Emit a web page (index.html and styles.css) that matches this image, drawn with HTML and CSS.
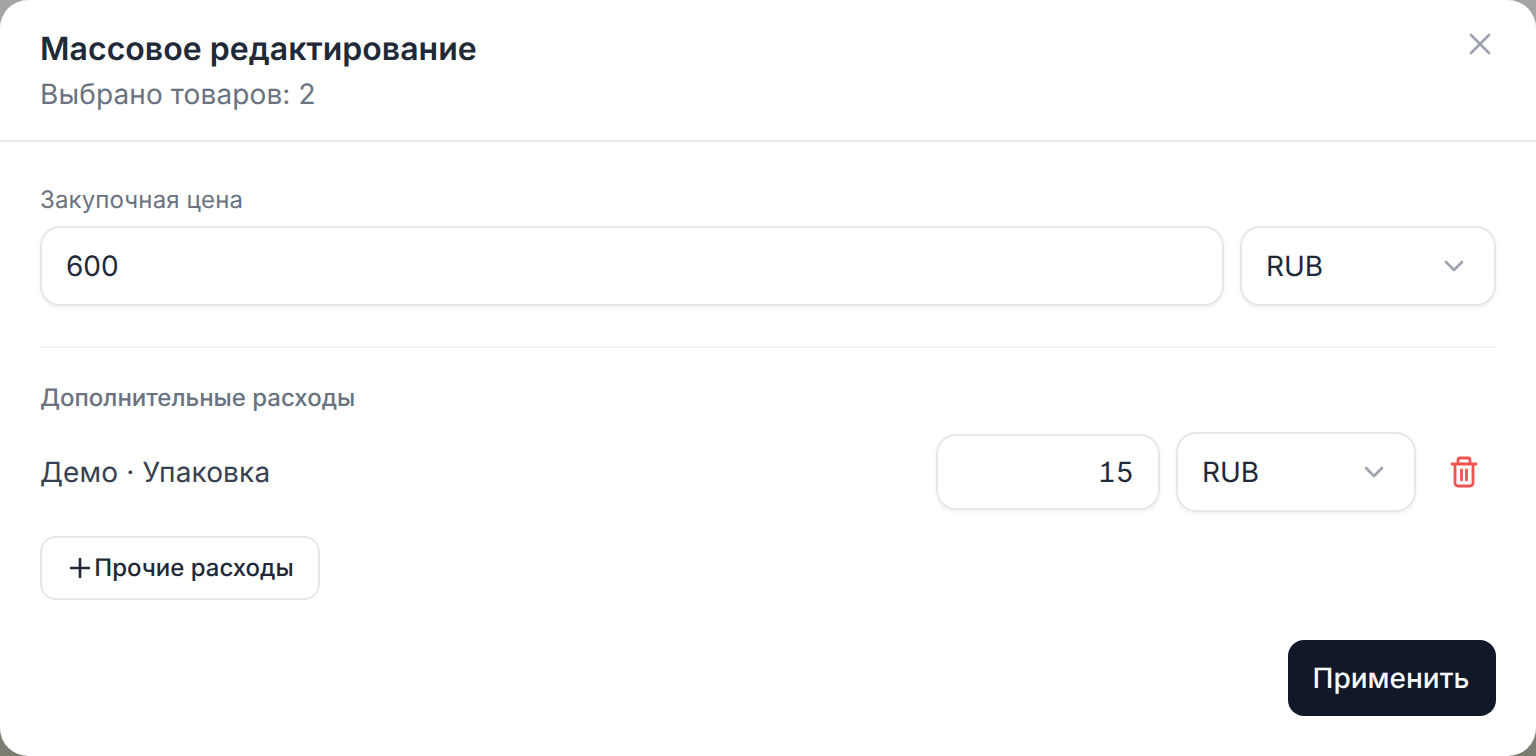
FILE: index.html
```html
<!DOCTYPE html>
<html lang="ru">
<head>
    <meta charset="UTF-8">
    <title>Массовое редактирование</title>
    <link rel="stylesheet" href="styles.css">
</head>
<body>
    <div class="modal">
        <div class="modal__head">
            <div>
                <h1 class="modal__title">Массовое редактирование</h1>
                <p class="modal__sub">Выбрано товаров: 2</p>
            </div>
            <button class="close" type="button" aria-label="Закрыть">
                <svg width="28" height="28" viewBox="0 0 28 28" fill="none" stroke="#9ca3af" stroke-width="2.6" stroke-linecap="round"><path d="M5 5l18 18M23 5L5 23"/></svg>
            </button>
        </div>
        <div class="modal__body">
            <div class="field-label">Закупочная цена</div>
            <div class="price-row">
                <input class="input input--price" type="text" value="600">
                <div class="select select--price">
                    <span>RUB</span>
                    <svg class="chevron" width="24" height="24" viewBox="0 0 24 24" fill="none" stroke="#9ca3af" stroke-width="2.6" stroke-linecap="round" stroke-linejoin="round"><path d="M4 8l8 8 8-8"/></svg>
                </div>
            </div>
            <div class="divider"></div>
            <div class="field-label field-label--strong">Дополнительные расходы</div>
            <div class="cost-row">
                <div class="cost-row__name">Демо · Упаковка</div>
                <input class="input input--cost" type="text" value="15">
                <div class="select select--cost">
                    <span>RUB</span>
                    <svg class="chevron" width="24" height="24" viewBox="0 0 24 24" fill="none" stroke="#9ca3af" stroke-width="2.6" stroke-linecap="round" stroke-linejoin="round"><path d="M4 8l8 8 8-8"/></svg>
                </div>
                <button class="trash" type="button" aria-label="Удалить">
                    <svg width="28" height="32" viewBox="0 0 28 32" fill="none" stroke="#ef5350" stroke-width="2.8" stroke-linecap="round" stroke-linejoin="round"><path d="M2 8h24M8 8V4a2 2 0 0 1 2-2h8a2 2 0 0 1 2 2v4M5 8v19a3 3 0 0 0 3 3h12a3 3 0 0 0 3-3V8M11.500 14v10M16.500 14v10"/></svg>
                </button>
            </div>
            <button class="btn-add" type="button">
                <svg width="20" height="20" viewBox="0 0 20 20" fill="none" stroke="#1f2937" stroke-width="2.6" stroke-linecap="round"><path d="M10 1v18M1 10h18"/></svg>
                <span>Прочие расходы</span>
            </button>
            <div class="modal__foot">
                <button class="btn-apply" type="button">Применить</button>
            </div>
        </div>
    </div>
</body>
</html>
```

FILE: styles.css
```css
* {
    box-sizing: border-box;
}

html, body {
    height: 100%;
}

body {
    margin: 0;
    overflow: hidden;
    font-family: Inter, "Noto Sans", sans-serif;
    text-rendering: geometricPrecision;
    color: #1f2937;
    background: linear-gradient(to bottom, #a3a4a6 0%, #a3a4a6 60%, #7c7d70 100%);
}

.modal {
    height: 756px;
    background: #fff;
    border-radius: 28px;
}

.modal__head {
    height: 142px;
    padding: 27px 40px 0;
    border-bottom: 2px solid #e5e7eb;
    display: flex;
    justify-content: space-between;
    align-items: flex-start;
}

.modal__title {
    margin: 0;
    font-size: 32px;
    line-height: 44px;
    font-weight: 600;
    letter-spacing: 0.04px;
    color: #1f2937;
}

.modal__sub {
    margin: 3px 0 0;
    font-size: 28px;
    line-height: 40px;
    letter-spacing: 0.12px;
    color: #6b7280;
}

.close {
    border: 0;
    padding: 0;
    background: none;
    width: 28px;
    height: 28px;
    margin: 3px 2px 0 0;
}

.modal__body {
    padding: 40px 40px 0;
}

.field-label {
    font-size: 24px;
    line-height: 36px;
    letter-spacing: 0.13px;
    color: #6b7280;
    margin-bottom: 8px;
}

.field-label--strong {
    font-weight: 500;
    letter-spacing: 0;
    margin-bottom: 16px;
}

.price-row {
    display: flex;
    gap: 16px;
}

.input, .select {
    border: 2px solid #e5e7eb;
    border-radius: 20px;
    background: #fff;
    box-shadow: 0 2px 4px rgba(0, 0, 0, 0.05);
    font-family: inherit;
    font-size: 28px;
    color: #1f2937;
    padding: 0 24px;
    outline: none;
    text-rendering: geometricPrecision;
}

.select {
    display: flex;
    align-items: center;
    justify-content: space-between;
}

.chevron {
    margin-right: 4px;
}

.input--price {
    flex: 1;
    min-width: 0;
    height: 80px;
}

.select--price {
    width: 256px;
    height: 80px;
}

.divider {
    height: 2px;
    background: #f3f4f6;
    margin: 40px 0 32px;
}

.cost-row {
    display: flex;
    align-items: center;
    gap: 16px;
    height: 80px;
}

.cost-row__name {
    flex: 1;
    font-size: 28px;
    letter-spacing: 0.14px;
    color: #374151;
}

.input--cost {
    width: 224px;
    height: 76px;
    text-align: right;
    font-feature-settings: "tnum", "ss01", "cv01";
}

.select--cost {
    width: 240px;
    height: 80px;
}

.trash {
    border: 0;
    padding: 0;
    background: none;
    width: 64px;
    height: 64px;
    display: flex;
    align-items: center;
    justify-content: center;
}

.btn-add {
    margin-top: 24px;
    width: 280px;
    height: 64px;
    border: 2px solid #e5e7eb;
    border-radius: 16px;
    background: #fff;
    display: flex;
    align-items: center;
    justify-content: center;
    gap: 4px;
    padding: 0 0 2px 4px;
    font-family: inherit;
    font-size: 24px;
    font-weight: 500;
    color: #1f2937;
    text-rendering: geometricPrecision;
}

.btn-add svg {
    margin-top: 2px;
}

.modal__foot {
    display: flex;
    justify-content: flex-end;
    margin-top: 40px;
}

.btn-apply {
    width: 208px;
    height: 76px;
    border: 0;
    border-radius: 16px;
    background: #111827;
    color: #f9fafb;
    font-family: inherit;
    font-size: 28px;
    font-weight: 500;
    padding: 0 2px 0 0;
    text-rendering: geometricPrecision;
}
```
